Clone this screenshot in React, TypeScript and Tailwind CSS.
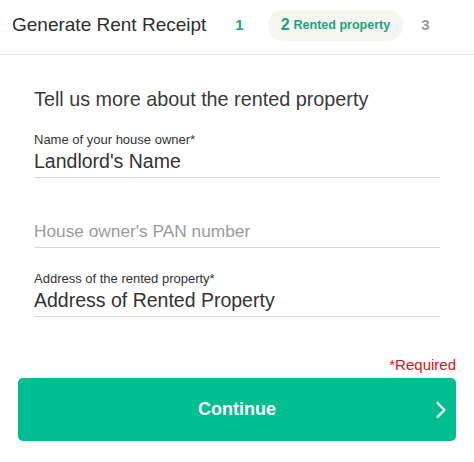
import React from "react";

const fields = [
  { label: "Name of your house owner*", value: "Landlord's Name" },
  { label: "", value: "", placeholder: "House owner's PAN number" },
  { label: "Address of the rented property*", value: "Address of Rented Property" },
];

export default function App() {
  return (
    <div className="w-[474px] h-[462px] bg-white font-['Liberation_Sans',Arial,sans-serif] text-[#333]">
      <div className="flex items-center h-[55px] pb-[4px] border-b border-[#e8e8e8] pl-3">
        <h1 className="text-[19px] text-[#2d2d2d]">Generate Rent Receipt</h1>
        <span className="ml-[29px] text-[15px] font-bold text-[#1aa57c]">1</span>
        <div className="ml-[24px] flex items-center h-[31px] px-[13px] rounded-full bg-[#f5f6f1]">
          <span className="text-[16px] font-bold text-[#1aa57c]">2</span>
          <span className="ml-[4px] text-[12.5px] font-bold text-[#1aa57c]">Rented property</span>
        </div>
        <span className="ml-[18px] text-[15px] font-bold text-[#9a9a9a]">3</span>
      </div>

      <div className="px-[34px] pt-[33px]">
        <h2 className="text-[19.8px] text-[#3a3a3a] leading-[22px]">Tell us more about the rented property</h2>
        <div className="flex flex-col mt-[22px] gap-[23px] w-[406px]">
          {fields.map((f, i) => (
            <div key={i} className={`flex flex-col border-b border-[#d9d9d9] ${f.label ? "" : "pt-[17px]"}`}>
              {f.label && <label className="text-[13px] text-[#333] leading-[16px]">{f.label}</label>}
              <div className={`leading-[26px] pb-[3px] ${f.value ? "text-[19.5px] text-[#333]" : "text-[17.3px] text-[#9b9b9b]"}`}>
                {f.value || f.placeholder}
              </div>
            </div>
          ))}
        </div>
      </div>

      <div className="px-[18px] mt-[39px]">
        <div className="text-right text-[15px] text-[#e0101e] leading-[18px]">*Required</div>
        <button className="relative mt-[4px] w-full h-[63px] rounded-[5px] bg-[#00be8f] flex items-center justify-center">
          <span className="text-[18px] font-bold text-white">Continue</span>
          <svg className="absolute right-[9px] top-1/2 -translate-y-1/2" width="12" height="18" viewBox="0 0 12 18" fill="none">
            <path d="M2.5 2l7 7-7 7" stroke="white" strokeWidth="2.2" strokeLinecap="round" strokeLinejoin="round" />
          </svg>
        </button>
      </div>
    </div>
  );
}
